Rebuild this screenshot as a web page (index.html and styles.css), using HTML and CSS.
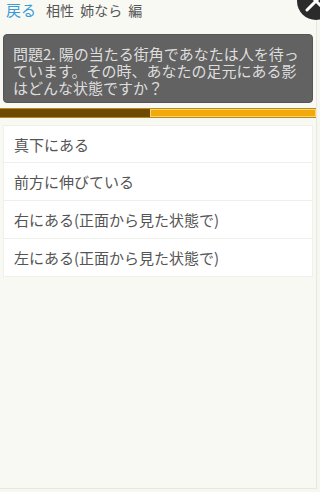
FILE: index.html
```html
<!DOCTYPE html>
<html>

<head>
	<meta charset="utf-8">
	<title>相性 姉なら 編</title>
	<link rel="stylesheet" href="styles.css">
</head>

<body>
	<div class="side">
		<header class="kopf">
			<a class="zurueck" href="#">戻る</a>
			<h1 class="titel">相性 姉なら 編</h1>
		</header>

		<div class="frage">
			問題2. 陽の当たる街角であなたは人を待っています。その時、あなたの足元にある影はどんな状態ですか？
		</div>

		<div class="fortschritt">
			<div class="fortschritt-fuld"></div>
			<div class="fortschritt-rest"></div>
		</div>

		<ul class="svar">
			<li class="svar-item">真下にある</li>
			<li class="svar-item">前方に伸びている</li>
			<li class="svar-item">右にある(正面から見た状態で)</li>
			<li class="svar-item">左にある(正面から見た状態で)</li>
		</ul>
	</div>

	<div class="luk">
		<svg width="40" height="40" viewBox="0 0 40 40">
			<circle cx="20" cy="20" r="19" fill="#2b2b2b" />
			<path d="M11 29 L28 12 M12 12 L28 28" stroke="#fff" stroke-width="3" stroke-linecap="round" />
		</svg>
	</div>
</body>

</html>
```

FILE: styles.css
```css
body {
	margin: 0;
	background-color: #f7f7f2;
	font-family: "Noto Sans CJK JP", "Noto Sans", sans-serif;
	color: #555;
}

.side {
	width: 317px;
	height: 489px;
	background-color: #f9f9f4;
	border-right: 1px solid #e8e8e2;
	border-bottom: 1px solid #e8e8e2;
	box-sizing: border-box;
	overflow: hidden;
}

.kopf {
	display: flex;
	align-items: center;
	height: 30px;
	padding-left: 6px;
	gap: 10px;
}

.zurueck {
	color: #3a9bd8;
	text-decoration: none;
	font-size: 15px;
	margin-top: -11px;
}

.titel {
	margin: 0;
	margin-top: -11px;
	font-size: 14px;
	word-spacing: 3px;
	font-weight: normal;
	color: #555;
}

.frage {
	margin: 4px 3px 0 3px;
	height: 69px;
	box-sizing: border-box;
	background-color: #626262;
	border: 1px solid #555;
	border-radius: 4px;
	color: #dedede;
	font-size: 15px;
	line-height: 17px;
	padding: 10px 10px 0 9px;
}

.fortschritt {
	display: flex;
	margin-top: 5px;
	height: 10px;
	background-color: #e9b63a;
	border: 1px solid #b98a1a;
	border-left: none;
	box-sizing: border-box;
	width: 317px;
}

.fortschritt-fuld {
	width: 150px;
	background-color: #6e4a02;
}

.fortschritt-rest {
	flex: 1;
	background-color: #f2a90a;
	border: 1px solid #fcd26a;
}

.svar {
	list-style: none;
	margin: 7px 3px 0 3px;
	padding: 0;
}

.svar-item {
	height: 38px;
	box-sizing: border-box;
	background-color: #fff;
	border: 1px solid #f0f0ea;
	border-top: none;
	font-size: 15px;
	line-height: 37px;
	padding-left: 10px;
	color: #555;
}

.svar-item:first-child {
	border-top: 1px solid #f0f0ea;
}

.luk {
	position: absolute;
	top: -19px;
	left: 296px;
}
```
